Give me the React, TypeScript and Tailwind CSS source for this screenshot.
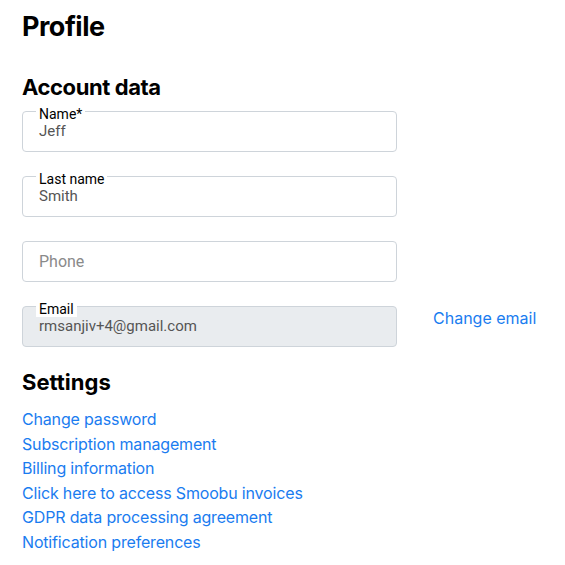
import React from "react";

const head = { fontFamily: "Inter, 'Noto Sans', sans-serif" };
const rob = { fontFamily: "Roboto, 'Liberation Sans', sans-serif" };

function Field({ label, value, placeholder, disabled }: { label?: string; value?: string; placeholder?: string; disabled?: boolean }) {
  return (
    <div
      className={`relative h-[41px] w-[375px] rounded-[4px] border border-[#ced4da] px-4 ${disabled ? "bg-[#e9ecef]" : "bg-white"} ${label ? "pt-[10px]" : "flex items-center"}`}
      style={rob}
    >
      {label && (
        <span className="absolute left-[13px] top-[-6px] bg-white px-[3px] text-[14px] leading-[16px] text-black">{label}</span>
      )}
      {value && <div className="text-[15px] leading-[18px] text-[#555]">{value}</div>}
      {placeholder && <div className="text-[16px] leading-[19px] text-[#8a8a8a]">{placeholder}</div>}
    </div>
  );
}

export default function App() {
  const links = [
    "Change password",
    "Subscription management",
    "Billing information",
    "Click here to access Smoobu invoices",
    "GDPR data processing agreement",
    "Notification preferences",
  ];
  return (
    <div className="min-h-[565px] bg-white pl-[22px] pt-[11px]" style={head}>
      <h1 className="text-[27px] font-bold leading-[32px] tracking-[-0.5px] text-black">Profile</h1>
      <h2 className="mt-[30px] text-[22px] font-bold leading-[28px] tracking-[-0.4px] text-black">Account data</h2>
      <div className="mt-[10px] flex flex-col gap-6">
        <Field label="Name*" value="Jeff" />
        <Field label="Last name" value="Smith" />
        <Field placeholder="Phone" />
        <div className="flex items-start gap-[36px]">
          <Field label="Email" value="rmsanjiv+4@gmail.com" disabled />
          <a className="text-[16px] leading-6 text-[#1a7cf0]">Change email</a>
        </div>
      </div>
      <h2 className="mt-[21px] text-[22px] font-bold leading-[28px] text-black">Settings</h2>
      <div className="mt-[11px] flex flex-col">
        {links.map((l) => (
          <a key={l} className="text-[16px] leading-[24.6px] tracking-[-0.17px] text-[#1a7cf0]">{l}</a>
        ))}
      </div>
    </div>
  );
}
